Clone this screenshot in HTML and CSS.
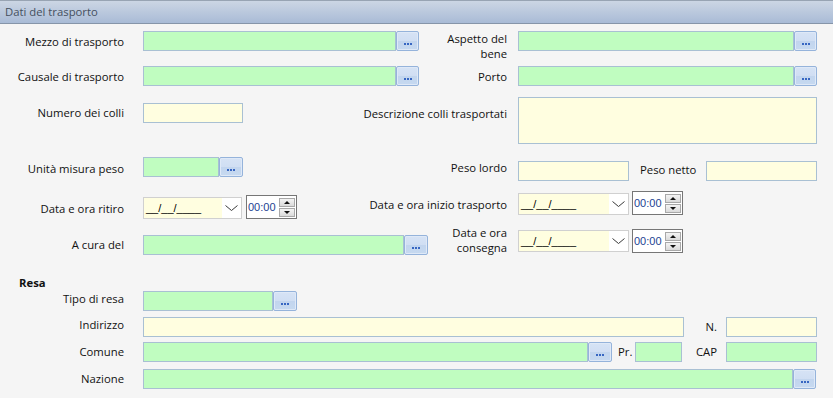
FILE: index.html
```html
<!DOCTYPE html>
<html lang="it">

<head>
    <meta charset="UTF-8">
    <title>Dati del trasporto</title>
    <link rel="stylesheet" href="styles.css">
</head>

<body>
    <div class="panelHead">Dati del trasporto</div>
    <div class="form">
        <div class="row r1">
            <label class="lab mt1">Mezzo di trasporto</label>
            <span class="fld green" style="width:253px"></span><span class="btn"></span>
            <label class="lab2 two"><span>Aspetto del bene</span></label>
            <div class="side">
                <span class="fld green grow"></span><span class="btn"></span>
            </div>
        </div>
        <div class="row r2">
            <label class="lab mt1">Causale di trasporto</label>
            <span class="fld green" style="width:253px"></span><span class="btn"></span>
            <label class="lab2 mt1">Porto</label>
            <div class="side">
                <span class="fld green grow"></span><span class="btn"></span>
            </div>
        </div>
        <div class="row r3">
            <label class="lab mt6">Numero dei colli</label>
            <span class="fld yellow mt6" style="width:100px"></span>
            <label class="lab2 mt7">Descrizione colli trasportati</label>
            <div class="side">
                <span class="fld yellow grow area"></span>
            </div>
        </div>
        <div class="row r4">
            <label class="lab mt2">Unità misura peso</label>
            <span class="fld green" style="width:76px"></span><span class="btn wide"></span>
            <label class="lab2 mt1">Peso lordo</label>
            <div class="side">
                <span class="fld yellow mt4" style="width:111px"></span>
                <label class="lab3 mt3">Peso netto</label>
                <span class="fld yellow mt4 grow"></span>
            </div>
        </div>
        <div class="row r5">
            <label class="lab mt8">Data e ora ritiro</label>
            <div class="date mt6" style="width:99px">
                <span class="dateTxt">__/__/____</span>
                <span class="dateArrow"><svg width="13" height="6" viewBox="0 0 13 6"><polyline points="0.5,0.5 6.5,5.5 12.5,0.5" fill="none" stroke="#3a3a3a" stroke-width="1"/></svg></span>
            </div>
            <div class="time mt4 gapL4">
                <span class="timeVal">00:00</span>
                <span class="spin"><span class="up"></span><span class="down"></span></span>
            </div>
            <label class="lab2 mt4">Data e ora inizio trasporto</label>
            <div class="side">
                <div class="date mt2" style="width:111px">
                    <span class="dateTxt">__/__/____</span>
                    <span class="dateArrow"><svg width="13" height="6" viewBox="0 0 13 6"><polyline points="0.5,0.5 6.5,5.5 12.5,0.5" fill="none" stroke="#3a3a3a" stroke-width="1"/></svg></span>
                </div>
                <div class="time gapL3">
                    <span class="timeVal">00:00</span>
                    <span class="spin"><span class="up"></span><span class="down"></span></span>
                </div>
            </div>
        </div>
        <div class="row r6">
            <label class="lab mt6">A cura del</label>
            <span class="fld green mt6" style="width:261px"></span><span class="btn wide mt6"></span>
            <label class="lab2 two cons"><span>Data e ora consegna</span></label>
            <div class="side">
                <div class="date mt1" style="width:111px">
                    <span class="dateTxt">__/__/____</span>
                    <span class="dateArrow"><svg width="13" height="6" viewBox="0 0 13 6"><polyline points="0.5,0.5 6.5,5.5 12.5,0.5" fill="none" stroke="#3a3a3a" stroke-width="1"/></svg></span>
                </div>
                <div class="time gapL3">
                    <span class="timeVal">00:00</span>
                    <span class="spin"><span class="up"></span><span class="down"></span></span>
                </div>
            </div>
        </div>

        <div class="section">Resa</div>
        <div class="row r7">
            <label class="lab up2">Tipo di resa</label>
            <span class="fld green" style="width:130px"></span><span class="btn wide"></span>
        </div>
        <div class="row r8">
            <label class="lab up2">Indirizzo</label>
            <span class="fld yellow" style="width:541px"></span>
            <label class="lab2">N.</label>
            <span class="fld yellow" style="width:91px"></span>
        </div>
        <div class="row r9">
            <label class="lab">Comune</label>
            <span class="fld green" style="width:445px"></span><span class="btn wide"></span>
            <label class="lab3 pr">Pr.</label>
            <span class="fld green" style="width:47px"></span>
            <label class="lab2">CAP</label>
            <span class="fld green" style="width:91px"></span>
        </div>
        <div class="row r10">
            <label class="lab">Nazione</label>
            <span class="fld green" style="width:650px"></span><span class="btn"></span>
        </div>
    </div>
</body>

</html>
```

FILE: styles.css
```css
body {
    margin: 0;
    background-color: #f5f5f5;
    font-family: "Open Sans", "Liberation Sans", sans-serif;
    font-size: 11.3px;
    color: #111;
}

.panelHead {
    height: 22px;
    line-height: 22px;
    padding-left: 5px;
    border-top: 1px solid #98a4b3;
    border-bottom: 1px solid #8695a9;
    background: linear-gradient(#ccd6e4, #a9bbd6);
    font-size: 11.3px;
    color: #45505e;
}

.row {
    display: flex;
    align-items: flex-start;
    padding-right: 16px;
}

.r1 { margin-top: 7px; height: 20px; }
.r2 { margin-top: 15px; height: 20px; }
.r3 { margin-top: 11px; height: 47px; }
.r4 { margin-top: 13px; height: 24px; }
.r5 { margin-top: 10px; height: 27px; }
.r6 { margin-top: 11px; height: 25px; }
.r7 { height: 19px; }
.r8 { margin-top: 7px; height: 20px; }
.r9 { margin-top: 5px; height: 20px; }
.r10 { margin-top: 7px; height: 20px; }

.lab {
    flex: none;
    width: 124px;
    margin-right: 19px;
    text-align: right;
    line-height: 20px;
    white-space: nowrap;
}

.lab2 {
    flex: 1;
    margin-right: 11px;
    text-align: right;
    line-height: 20px;
    white-space: nowrap;
}

.r8 .lab2,
.r9 .lab2 {
    margin-right: 9px;
}

.lab2.two {
    white-space: normal;
    line-height: 15px;
}

.lab2.two span {
    display: inline-block;
    width: 64px;
}

.lab2.cons {
    margin-top: -4px;
}

.lab2.cons span {
    width: 58px;
}

.lab3 {
    flex: 1;
    line-height: 20px;
    padding-left: 11px;
    white-space: nowrap;
}

.lab3.pr {
    flex: none;
    padding-left: 6px;
    margin-right: 3px;
}

.side {
    flex: none;
    width: 299px;
    display: flex;
    align-items: flex-start;
}

.side .lab3 {
    flex: none;
    width: 56px;
    margin-right: 10px;
}

.grow {
    flex: 1;
}

.fld {
    display: block;
    flex: none;
    height: 20px;
    box-sizing: border-box;
    border: 1px solid #a9c0d3;
}

.fld.grow {
    flex: 1;
}

.fld.area {
    height: 47px;
}

.green {
    background-color: #c0fdc0;
}

.yellow {
    background-color: #fffee0;
}

.btn {
    position: relative;
    flex: none;
    width: 23px;
    height: 20px;
    box-sizing: border-box;
    border: 1px solid #95b3db;
    border-radius: 2px;
    box-shadow: inset 0 0 0 1px #dfe9f7;
    background: linear-gradient(#d6e3f5 0, #d0def3 50%, #c2d5ee 50%, #c6d9f0 100%);
}

.btn.wide {
    width: 24px;
}

.btn::after {
    content: "";
    position: absolute;
    left: 7px;
    top: 11px;
    width: 2px;
    height: 2px;
    background-color: #3766c2;
    box-shadow: 3px 0 #3766c2, 6px 0 #3766c2;
}

.date {
    flex: none;
    display: flex;
    height: 22px;
    box-sizing: border-box;
    border: 1px solid #d0d0d0;
    background-color: #fff;
}

.dateTxt {
    flex: 1;
    padding-left: 2px;
    background-color: #fffee0;
    font-family: "Liberation Sans", sans-serif;
    font-size: 11px;
    line-height: 20px;
    color: #000;
}

.dateArrow {
    width: 19px;
    display: flex;
    align-items: center;
    justify-content: center;
}

.time {
    flex: none;
    display: flex;
    align-items: flex-start;
    justify-content: space-between;
    width: 51px;
    height: 24px;
    box-sizing: border-box;
    padding: 2px 1px 0 1px;
    border: 1px solid #767676;
    background-color: #fff;
}

.gapL4 { margin-left: 4px; }
.gapL3 { margin-left: 3px; }

.timeVal {
    font-family: "Liberation Sans", sans-serif;
    font-size: 11px;
    line-height: 18px;
    color: #1d3f92;
}

.spin {
    display: flex;
    flex-direction: column;
    gap: 1px;
    width: 16px;
}

.spin span {
    position: relative;
    height: 9px;
    box-sizing: border-box;
    border: 1px solid #a8a8a8;
    background: linear-gradient(#f4f4f4, #dadada);
}

.spin span::after {
    content: "";
    position: absolute;
    left: 4px;
    border-left: 3px solid transparent;
    border-right: 3px solid transparent;
}

.spin .up::after {
    top: 2px;
    border-bottom: 3px solid #111;
}

.spin .down::after {
    top: 2px;
    border-top: 3px solid #111;
}

.section {
    margin-top: 21px;
    padding-left: 19px;
    font-weight: bold;
    line-height: 16px;
}

.mt1 { margin-top: 1px; }
.mt2 { margin-top: 2px; }
.mt3 { margin-top: 3px; }
.mt4 { margin-top: 4px; }
.mt6 { margin-top: 6px; }
.mt7 { margin-top: 7px; }
.mt8 { margin-top: 8px; }
.up2 { margin-top: -2px; }
```
